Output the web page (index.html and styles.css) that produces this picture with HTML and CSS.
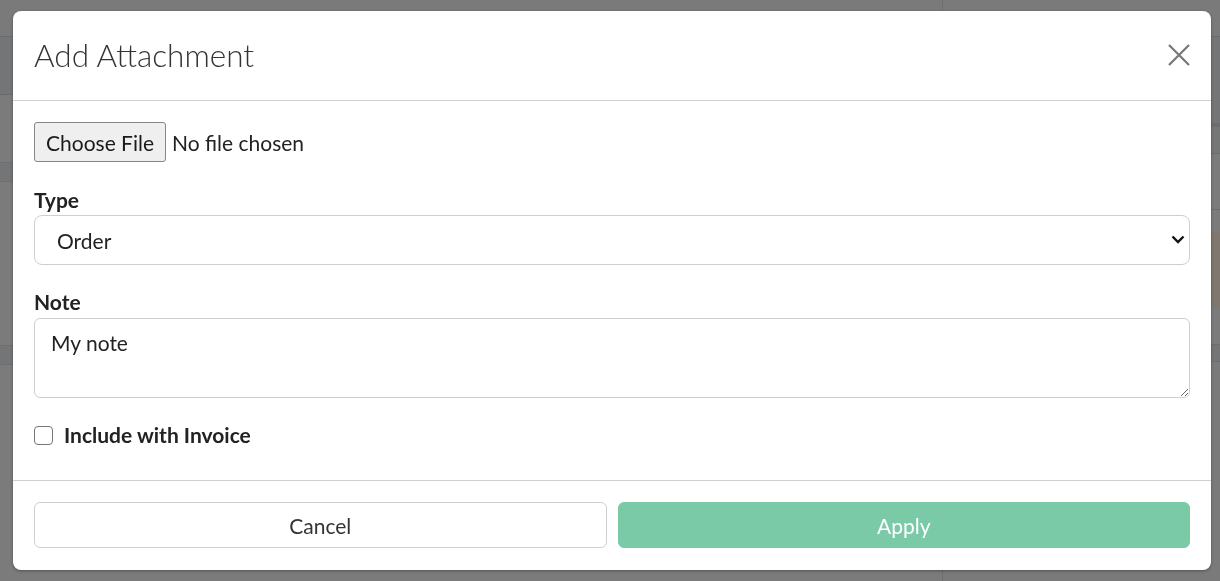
FILE: index.html
```html
<!DOCTYPE html>
<html lang="en">
<head>
<meta charset="utf-8">
<title>Add Attachment</title>
<link rel="stylesheet" href="styles.css">
</head>
<body>
<div class="backdrop">
  <div class="bg-main">
    <div class="r r1"></div>
    <div class="r r2"></div>
    <div class="r r3"></div>
    <div class="r r4"></div>
    <div class="r r5"></div>
    <div class="r r6"></div>
    <div class="r r7"></div>
  </div>
  <div class="bg-side">
    <div class="r s1"></div>
    <div class="r s2"></div>
    <div class="r s3"></div>
    <div class="r s4"></div>
    <div class="r s5"></div>
    <div class="r s6"></div>
    <div class="r s7"></div>
    <div class="r s8"></div>
    <div class="r s9"></div>
    <div class="r s10"></div>
  </div>
</div>

<div class="modal">
  <div class="modal-header">
    <h1 class="modal-title">Add Attachment</h1>
    <button class="close" aria-label="Close">
      <svg width="22" height="22" viewBox="0 0 22 22"><path d="M1 1 L21 21 M21 1 L1 21" stroke="#777" stroke-width="2.2" fill="none"/></svg>
    </button>
  </div>
  <div class="modal-body">
    <div class="file-row">
      <span class="file-btn">Choose File</span>
      <span class="file-name">No file chosen</span>
    </div>
    <div class="group">
      <label class="lbl">Type</label>
      <div class="select-wrap">
        <select class="select"><option>Order</option></select>
        <svg class="chev" width="14" height="9" viewBox="0 0 14 9"><path d="M1.5 1.5 L7 7 L12.5 1.5" stroke="#111" stroke-width="2.4" fill="none"/></svg>
      </div>
    </div>
    <div class="group">
      <label class="lbl">Note</label>
      <textarea class="textarea">My note</textarea>
    </div>
    <label class="check-row">
      <input type="checkbox" class="check">
      <span>Include with Invoice</span>
    </label>
  </div>
  <div class="modal-footer">
    <button class="btn btn-cancel">Cancel</button>
    <button class="btn btn-apply">Apply</button>
  </div>
</div>
</body>
</html>
```

FILE: styles.css
```css
* { box-sizing: border-box; }
html, body {
  margin: 0;
  padding: 0;
  height: 100%;
  overflow: hidden;
}
body {
  font-family: Lato, "Liberation Sans", sans-serif;
  color: #333;
  background: #7b7b7b;
}

.backdrop {
  position: fixed;
  inset: 0;
  display: grid;
  grid-template-columns: 942px 1fr;
}
.bg-main, .bg-side { display: flex; flex-direction: column; }
.bg-side { border-left: 1px solid #6e6e6e; }
.r { flex: none; }
.r1 { height: 36px; background: #7a7a7a; }
.r2 { height: 59px; background: #747577; border-top: 1px solid #6a6b6d; border-bottom: 1px solid #6a6b6d; }
.r3 { height: 67px; background: #7b7b7b; }
.r4 { height: 20px; background: #747577; border-top: 1px solid #6e6e6e; border-bottom: 1px solid #6e6e6e; }
.r5 { height: 163px; background: #7b7b7b; }
.r6 { height: 20px; background: #747577; border-top: 1px solid #6e6e6e; border-bottom: 1px solid #6e6e6e; }
.r7 { flex: 1; background: #7b7b7b; }

.s1 { height: 36px; background: #7a7a7a; }
.s2 { height: 87px; background: #747577; border-top: 1px solid #6a6b6d; }
.s3 { height: 4px; background: #6c6d6f; }
.s4 { height: 27px; background: #757676; border-bottom: 1px solid #6e6e6e; }
.s5 { height: 56px; background: #7b7b7b; border-bottom: 1px solid #6e6e6e; }
.s6 { height: 22px; background: #7b7b7b; }
.s7 { height: 76px; background: #80786f; }
.s8 { height: 37px; background: #7b7b7b; border-bottom: 1px solid #6e6e6e; }
.s9 { height: 17px; background: #747577; border-bottom: 1px solid #6e6e6e; }
.s10 { flex: 1; background: #7a7a7a; }

.modal {
  position: fixed;
  left: 13px;
  top: 11px;
  width: 1198px;
  height: 559px;
  background: #fff;
  border-radius: 8px;
  box-shadow: 0 1px 3px rgba(0, 0, 0, 0.35);
  display: flex;
  flex-direction: column;
}

.modal-header {
  display: flex;
  align-items: center;
  justify-content: space-between;
  padding: 21px 21px 22px 21px;
  border-bottom: 1px solid #d0d0d0;
  height: 90px;
  flex: none;
}
.modal-title {
  margin: 0;
  font-size: 31.5px;
  font-weight: 300;
  line-height: 46px;
  color: #333;
}
.close {
  background: none;
  border: none;
  padding: 0;
  width: 22px;
  height: 22px;
  display: flex;
  cursor: pointer;
}

.modal-body {
  padding: 21px 21px 0 21px;
  height: 379px;
  flex: none;
}

.file-row {
  display: flex;
  align-items: center;
  height: 40px;
  font-size: 21px;
}
.file-btn {
  height: 40px;
  padding: 0 11px;
  display: flex;
  align-items: center;
  background: #efefef;
  border: 1px solid #858585;
  border-radius: 3px;
  color: #1a1a1a;
}
.file-name {
  margin-left: 6px;
  color: #222;
}

.group { margin-top: 26px; }
.group + .group { margin-top: 25px; }
.lbl {
  display: block;
  font-size: 21px;
  font-weight: 700;
  line-height: 24px;
  color: #222;
  margin-bottom: 3px;
}
.group + .group .lbl { margin-bottom: 4px; }

.select-wrap { position: relative; }
.select {
  appearance: none;
  -webkit-appearance: none;
  width: 100%;
  height: 50px;
  border: 1px solid #cfcfcf;
  border-radius: 8px;
  background: #fff;
  font-family: inherit;
  font-size: 21px;
  color: #222;
  padding: 0 30px 0 22px;
  outline: none;
}
.chev {
  position: absolute;
  right: 5px;
  top: 20px;
  pointer-events: none;
}

.textarea {
  display: block;
  width: 100%;
  height: 80px;
  border: 1px solid #cfcfcf;
  border-radius: 6px;
  font-family: inherit;
  font-size: 21px;
  line-height: 30px;
  color: #222;
  padding: 9px 16px;
  outline: none;
}

.check-row {
  margin-top: 25px;
  display: flex;
  align-items: center;
  height: 24px;
  font-size: 21px;
  font-weight: 700;
  line-height: 24px;
  color: #222;
}
.check {
  appearance: none;
  -webkit-appearance: none;
  margin: 0 11px 0 0;
  width: 19px;
  height: 19px;
  border: 1.5px solid #767676;
  border-radius: 4px;
  background: #fff;
}

.modal-footer {
  border-top: 1px solid #d0d0d0;
  padding: 21px 21px 0 21px;
  display: grid;
  grid-template-columns: 1fr 1fr;
  gap: 11px;
}
.btn {
  height: 46px;
  border-radius: 6px;
  font-family: inherit;
  font-size: 21px;
  cursor: pointer;
}
.btn-cancel {
  background: #fff;
  border: 1px solid #cfcfcf;
  color: #333;
}
.btn-apply {
  background: #7acaa8;
  border: 1px solid #7acaa8;
  color: #fff;
}
```
